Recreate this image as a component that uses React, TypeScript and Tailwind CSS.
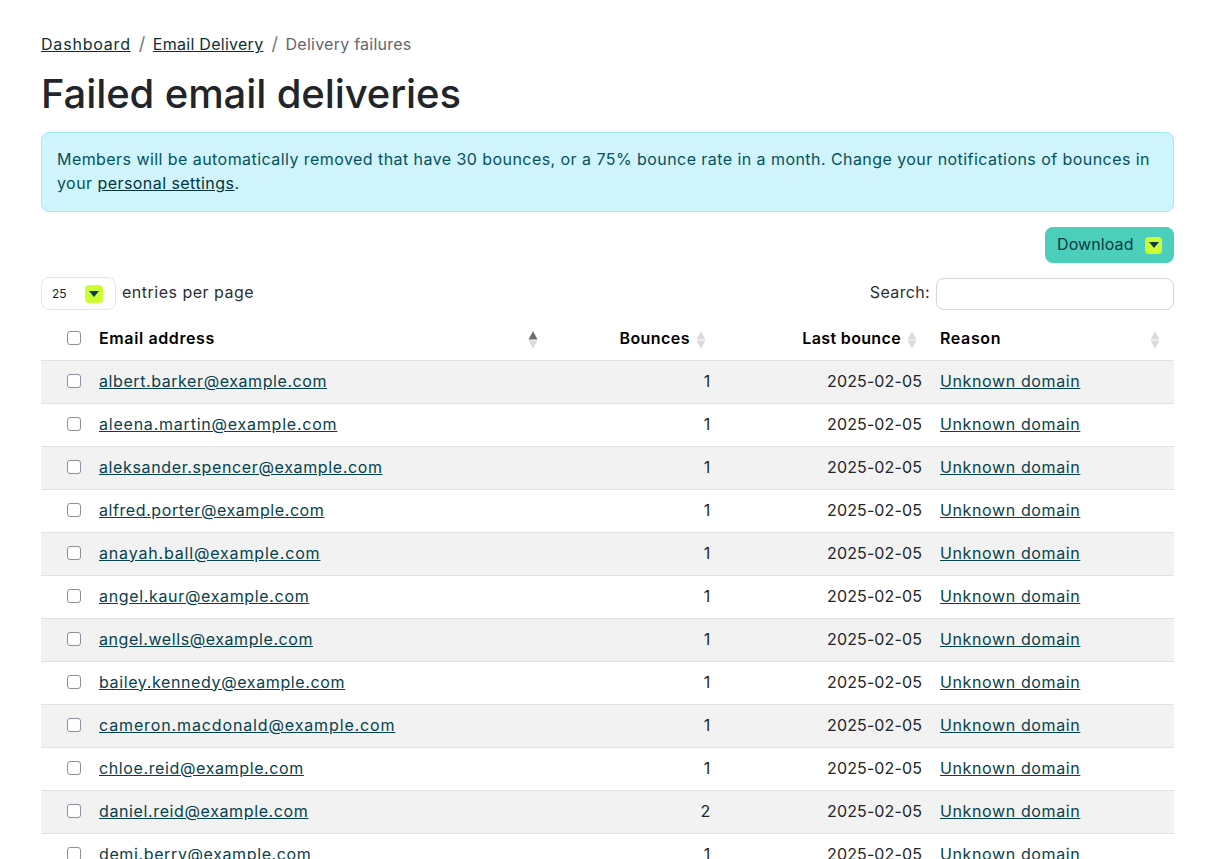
import React from "react";

const rows = [
  { email: "albert.barker@example.com", bounces: 1, track: "tracking-[0.58px]" },
  { email: "aleena.martin@example.com", bounces: 1, track: "tracking-[0.78px]" },
  { email: "aleksander.spencer@example.com", bounces: 1, track: "tracking-[0.63px]" },
  { email: "alfred.porter@example.com", bounces: 1, track: "tracking-[0.58px]" },
  { email: "anayah.ball@example.com", bounces: 1, track: "tracking-[0.83px]" },
  { email: "angel.kaur@example.com", bounces: 1, track: "tracking-[0.66px]" },
  { email: "angel.wells@example.com", bounces: 1, track: "tracking-[0.57px]" },
  { email: "bailey.kennedy@example.com", bounces: 1, track: "tracking-[0.62px]" },
  { email: "cameron.macdonald@example.com", bounces: 1, track: "tracking-[0.87px]" },
  { email: "chloe.reid@example.com", bounces: 1, track: "tracking-[0.62px]" },
  { email: "daniel.reid@example.com", bounces: 2, track: "tracking-[0.62px]" },
  { email: "demi.berry@example.com", bounces: 1, track: "tracking-[0.62px]" },
];

function SortIcon({ active = false }: { active?: boolean }) {
  return (
    <svg width="10" height="18" viewBox="0 0 10 18" className="absolute top-[14px] right-[14px]">
      <path d="M5 0 L9.5 8.5 H0.5 Z" fill={active ? "#6b6e70" : "#dcdcdc"} />
      <path d="M5 18 L9.5 9.5 H0.5 Z" fill="#dcdcdc" />
    </svg>
  );
}

function Caret({ className }: { className: string }) {
  return (
    <span className={`flex items-center justify-center bg-[#ccff33] rounded-[4px] ${className}`}>
      <svg width="10" height="6" viewBox="0 0 10 6">
        <path d="M0 0 H10 L5 6 Z" fill="#0d3b47" />
      </svg>
    </span>
  );
}

function RowCheck() {
  return (
    <input
      type="checkbox"
      className="m-0 block h-[14px] w-[14px] appearance-none rounded-[3px] border border-[#8f8d9e] bg-white"
    />
  );
}

export default function App() {
  return (
    <div className="h-[859px] overflow-hidden bg-white pl-[41px] pr-[38px] pt-[32px] font-['Inter',sans-serif] text-[16px] leading-[24px] tracking-[0.62px] text-[#212529]">
      <nav className="flex items-center h-[24px] text-[#5f666d]">
        <a className="underline tracking-[0.8px] text-[#0b2f36]">Dashboard</a>
        <span className="ml-[8px] mr-[7px] text-[18px] text-[#6c757d]">/</span>
        <a className="underline tracking-[0.27px] text-[#0b2f36]">Email Delivery</a>
        <span className="ml-[8px] mr-[7px] text-[18px] text-[#6c757d]">/</span>
        <span className="tracking-[0.25px]">Delivery failures</span>
      </nav>

      <h1 className="mt-[14px] text-[40px] leading-[48px] font-medium tracking-[-0.1px] text-[#212529]">
        Failed email deliveries
      </h1>

      <div className="mt-[14px] h-[80px] rounded-[8px] border border-[#9eeaf9] bg-[#cff4fc] px-[15px] py-[14px] tracking-[0.44px] text-[#055160]">
        Members will be automatically removed that have 30 bounces, or a 75% bounce rate in a month. Change your notifications of bounces in your{" "}
        <a className="underline text-[#04343d]">personal settings</a>.
      </div>

      <div className="mt-[15px] flex justify-end">
        <button className="flex h-[36px] w-[129px] items-center justify-between rounded-[8px] bg-[#4bcfbb] px-[12px] tracking-[0.1px] text-[#0b3a46]">
          <span className="mb-[2px]">Download</span>
          <Caret className="h-[17px] w-[17px]" />
        </button>
      </div>

      <div className="mt-[14px] flex items-center justify-between h-[33px]">
        <div className="flex items-center">
          <div className="flex h-[33px] w-[75px] items-center justify-between rounded-[8px] border border-[#e3e5e8] pl-[10px] pr-[12px] text-[12px] tracking-normal text-[#212529]">
            25
            <Caret className="h-[18px] w-[18px]" />
          </div>
          <span className="mb-[3px] ml-[6px] tracking-[0.5px] text-[#2b3035]">entries per page</span>
        </div>
        <div className="flex items-center">
          <span className="mb-[3px] mr-[6px] tracking-[0.35px] text-[#2b3035]">Search:</span>
          <input className="h-[32px] w-[238px] rounded-[8px] border border-[#d3d5da] bg-white" />
        </div>
      </div>

      <table className="mt-[7px] w-full table-fixed border-collapse">
        <colgroup>
          <col className="w-[49px]" />
          <col className="w-[462px]" />
          <col className="w-[168px]" />
          <col className="w-[211px]" />
          <col className="w-[243px]" />
        </colgroup>
        <thead>
          <tr className="h-[43px] border-b border-[#dee2e6] text-black">
            <th className="p-0 pl-[26px] text-left align-middle">
              <RowCheck />
            </th>
            <th className="relative pl-[9px] text-left font-semibold">
              Email address
              <SortIcon active />
            </th>
            <th className="relative pr-[30px] text-right font-semibold tracking-[0.45px]">
              Bounces
              <SortIcon />
            </th>
            <th className="relative pr-[30px] text-right font-semibold tracking-[0.35px]">
              Last bounce
              <SortIcon />
            </th>
            <th className="relative pl-[9px] text-left font-semibold">
              Reason
              <SortIcon />
            </th>
          </tr>
        </thead>
        <tbody>
          {rows.map((row, idx) => (
            <tr key={row.email} className={`h-[43px] border-b border-[#dee2e6] ${idx % 2 === 0 ? "bg-[#f2f2f2]" : "bg-white"}`}>
              <td className="p-0 pb-[2px] pl-[26px] align-middle">
                <RowCheck />
              </td>
              <td className="pb-[2px] pl-[9px]">
                <a className={`underline text-[#06414d] ${row.track}`}>{row.email}</a>
              </td>
              <td className="pb-[2px] pr-[9px] text-right">{row.bounces}</td>
              <td className="pb-[2px] pr-[9px] text-right tracking-[0.12px]">2025-02-05</td>
              <td className="pb-[2px] pl-[9px]">
                <a className="underline text-[#06414d]">Unknown domain</a>
              </td>
            </tr>
          ))}
        </tbody>
      </table>
    </div>
  );
}
